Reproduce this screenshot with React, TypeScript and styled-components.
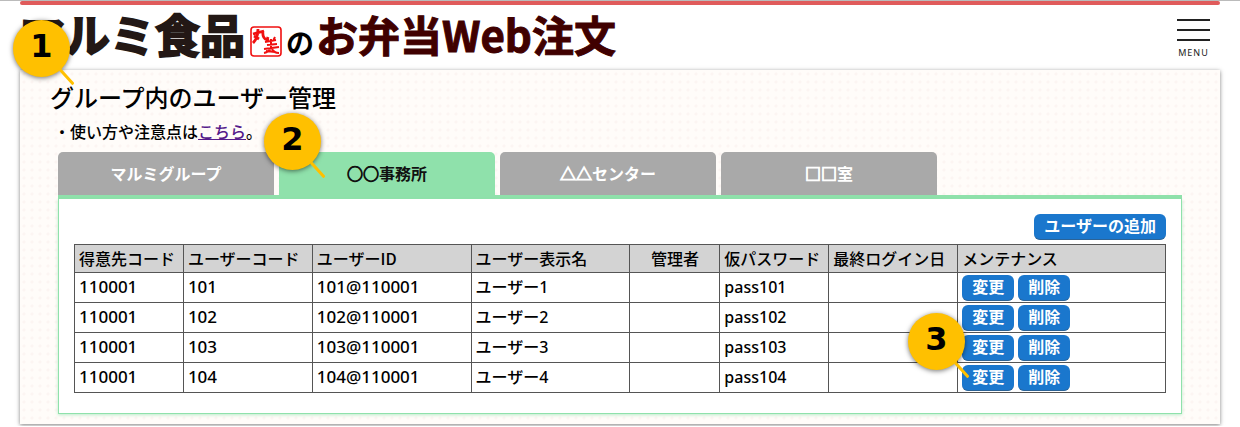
import React from "react";
import styled, { createGlobalStyle } from "styled-components";

const GlobalStyle = createGlobalStyle`
  *, *::before, *::after { box-sizing: border-box; }
  body {
    margin: 0;
    background: #fff;
    color: #000;
    font-family: "Noto Sans CJK JP", sans-serif;
    font-size: 16px;
    font-weight: 500;
    line-height: 24px;
    border-top: 1px solid #bbb;
  }
`;

const Page = styled.div`
  margin: 0 20px;
  padding-bottom: 2px;
`;

const Header = styled.header`
  display: flex;
  align-items: flex-start;
  justify-content: space-between;
  height: 69px;
  position: relative;
  padding-top: 8px;
  &::before {
    content: "";
    position: absolute;
    inset: 0 0 auto;
    height: 4px;
    border-radius: 2px;
    background: #e05b5b;
  }
`;

const Logo = styled.h1`
  display: flex;
  align-items: flex-start;
  margin: 0;
  font-weight: 700;
  line-height: 50px;
  white-space: nowrap;
`;

const Company = styled.span`
  font-size: 45px;
  color: #231815;
  -webkit-text-stroke: 2px #231815;
`;

const Stamp = styled.svg`
  width: 32px;
  height: 32px;
  margin: 17px 2px 0 5px;
`;

const Particle = styled.span`
  font-size: 28px;
  padding-top: 8px;
  width: 32px;
  text-align: center;
`;

const Service = styled.span`
  font-size: 42px;
  color: #400000;
  -webkit-text-stroke: 1px #400000;
`;

const MenuButton = styled.button`
  display: flex;
  flex-direction: column;
  align-items: center;
  gap: 8px;
  margin: 10px 10px 0 0;
  padding: 0;
  border: 0;
  background: none;
  font: 400 9px/8px "Noto Sans", sans-serif;
  letter-spacing: 1px;
  color: #222;
`;

const MenuLine = styled.span`
  width: 33px;
  height: 2px;
  background: #222;
`;

const Panel = styled.main`
  padding: 11px 38px 10px;
  background-color: #fffcf9;
  background-image: radial-gradient(circle, #fcf5f2 1px, transparent 2px);
  background-size: 8px 8px;
  box-shadow: 0 1px 4px rgba(0, 0, 0, 0.5);
`;

const Title = styled.h2`
  margin: 0 0 0 -8px;
  font-size: 24px;
  font-weight: 500;
  line-height: 32px;
`;

const Note = styled.p`
  margin: 6px 0 9px -4px;
`;

const HelpLink = styled.a`
  color: #551a8b;
`;

const Tabs = styled.div`
  display: flex;
  gap: 5px;
  border-bottom: 4px solid #8fe1ab;
`;

const Tab = styled.button<{ $active?: boolean }>`
  flex: 0 1 216px;
  height: 43px;
  padding: 0 0 2px;
  border: 0;
  border-radius: 5px 5px 0 0;
  background: ${(p) => (p.$active ? "#8fe1ab" : "#a9a9a9")};
  color: ${(p) => (p.$active ? "#111" : "#fff")};
  font: bold 16px/24px "Noto Sans CJK JP", sans-serif;
`;

const Mark = styled.span`
  -webkit-text-stroke: 1px currentColor;
`;

const TabPanel = styled.section`
  padding: 15px 15px 20px;
  background: #fff;
  border: 1px solid #8fe1ab;
  border-top: 0;
  box-shadow: 0 1px 3px rgba(143, 225, 171, 0.6);
`;

const Toolbar = styled.div`
  display: flex;
  justify-content: flex-end;
  margin-bottom: 4px;
`;

const ActionButton = styled.button`
  height: 26px;
  padding: 0 10px 2px;
  border: 0;
  border-bottom: 1px solid #2c6396;
  border-radius: 6px;
  background: #1a77cd;
  color: #fff;
  font: bold 16px/23px "Noto Sans CJK JP", sans-serif;
`;

const Actions = styled.div`
  display: flex;
  gap: 4px;
`;

const UserTable = styled.table`
  width: 100%;
  table-layout: fixed;
  border-collapse: collapse;
`;

const Th = styled.th<{ $center?: boolean }>`
  height: 28px;
  padding: 0 4px 2px;
  border: 1px solid #555;
  background: #d3d3d3;
  font-weight: 500;
  text-align: ${(p) => (p.$center ? "center" : "left")};
  white-space: nowrap;
`;

const Td = styled.td<{ $code?: boolean }>`
  height: 30px;
  padding: 0 4px 2px;
  border: 1px solid #555;
  font-family: "Noto Sans", "Noto Sans CJK JP", sans-serif;
  font-size: ${(p) => (p.$code ? 17 : 16)}px;
`;

const ActionTd = styled(Td)`
  padding: 0 4px;
`;

const Callout = styled.div<{ $x: number; $y: number }>`
  position: absolute;
  left: ${(p) => p.$x}px;
  top: ${(p) => p.$y}px;
  width: 57px;
  height: 57px;
  border-radius: 50%;
  background: #ffc000;
  box-shadow: 0 1px 5px rgba(0, 0, 0, 0.55);
  font: bold 32px/52px "DejaVu Sans", sans-serif;
  text-align: center;
  pointer-events: none;
  &::after {
    content: "";
    position: absolute;
    left: 47px;
    top: 48px;
    width: 20px;
    height: 3px;
    border-radius: 1px;
    background: #ffc000;
    transform-origin: 0 50%;
    transform: rotate(48deg);
  }
`;

const columns = [
  { label: "得意先コード", width: 109 },
  { label: "ユーザーコード", width: 129 },
  { label: "ユーザーID", width: 159 },
  { label: "ユーザー表示名", width: 159 },
  { label: "管理者", width: 90, center: true },
  { label: "仮パスワード", width: 109 },
  { label: "最終ログイン日", width: 129 },
  { label: "メンテナンス", width: 208 },
];

const users = [1, 2, 3, 4].map((n) => ({
  customer: "110001",
  code: `10${n}`,
  id: `10${n}@110001`,
  name: `ユーザー${n}`,
  password: `pass10${n}`,
}));

const tabs = [
  { mark: "", label: "マルミグループ" },
  { mark: "○○", label: "事務所" },
  { mark: "△△", label: "センター" },
  { mark: "□□", label: "室" },
];

export default function App() {
  return (
    <>
      <GlobalStyle />
      <Page>
        <Header>
          <Logo>
            <Company>マルミ食品</Company>
            <Stamp viewBox="0 0 32 32" fill="none" stroke="#f01010" aria-hidden="true">
              <rect x="1" y="1" width="30" height="29" rx="3" strokeWidth="1.6" />
              <path d="M3 8L14 5M8 3Q8 12 3 17M13 5Q12 12 17 14L18 11M4 10L9 13" strokeWidth="2.8" />
              <path d="M15 16L26 14M17 19L27 18M14 23L29 21M21 13V22M18 13L19 16M25 11L23 15M21 22Q19 26 14 27M22 23Q24 27 29 27M16 25L25 26" strokeWidth="2" />
            </Stamp>
            <Particle>の</Particle>
            <Service>お弁当Web注文</Service>
          </Logo>
          <MenuButton type="button">
            <MenuLine />
            <MenuLine />
            <MenuLine />
            MENU
          </MenuButton>
        </Header>
        <Panel>
          <Title>グループ内のユーザー管理</Title>
          <Note>
            ・使い方や注意点は<HelpLink href="#help">こちら</HelpLink>。
          </Note>
          <Tabs role="tablist">
            {tabs.map((tab, i) => (
              <Tab key={tab.label} type="button" role="tab" aria-selected={i === 1} $active={i === 1}>
                {tab.mark && <Mark>{tab.mark}</Mark>}
                {tab.label}
              </Tab>
            ))}
          </Tabs>
          <TabPanel role="tabpanel">
            <Toolbar>
              <ActionButton type="button">ユーザーの追加</ActionButton>
            </Toolbar>
            <UserTable>
              <colgroup>
                {columns.map((c) => (
                  <col key={c.label} style={{ width: `${(c.width / 1092) * 100}%` }} />
                ))}
              </colgroup>
              <thead>
                <tr>
                  {columns.map((c) => (
                    <Th key={c.label} scope="col" $center={c.center}>
                      {c.label}
                    </Th>
                  ))}
                </tr>
              </thead>
              <tbody>
                {users.map((u) => (
                  <tr key={u.code}>
                    <Td $code>{u.customer}</Td>
                    <Td $code>{u.code}</Td>
                    <Td $code>{u.id}</Td>
                    <Td>{u.name}</Td>
                    <Td />
                    <Td>{u.password}</Td>
                    <Td />
                    <ActionTd>
                      <Actions>
                        <ActionButton type="button">変更</ActionButton>
                        <ActionButton type="button">削除</ActionButton>
                      </Actions>
                    </ActionTd>
                  </tr>
                ))}
              </tbody>
            </UserTable>
          </TabPanel>
        </Panel>
      </Page>
      <Callout $x={13} $y={20}>1</Callout>
      <Callout $x={264} $y={113}>2</Callout>
      <Callout $x={908} $y={313}>3</Callout>
    </>
  );
}
